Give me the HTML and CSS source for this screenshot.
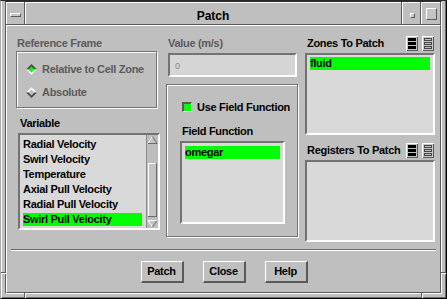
FILE: index.html
```
<!DOCTYPE html>
<html>
<head>
<meta charset="utf-8">
<title>Patch</title>
<link rel="stylesheet" href="styles.css">
</head>
<body>
<div class="win">
  <span class="notch notch-v notch-bl"></span>
  <span class="notch notch-v notch-br"></span>
  <span class="notch notch-h notch-lb"></span>
  <span class="notch notch-h notch-rb"></span>
  <div class="inner">
    <div class="titlebar">
      <div class="tb tb-menu"><span class="menu-bar"></span></div>
      <div class="tb tb-title">Patch</div>
      <div class="tb tb-min"><span class="min-box"></span></div>
      <div class="tb tb-max"><span class="max-box"></span></div>
    </div>
    <div class="client">
      <div class="panes">
        <div class="col col-left">
          <div class="label label-ref"><span class="disabled">Reference Frame</span></div>
          <div class="group group-ref">
            <div class="radio-row">
              <svg class="radio" width="11" height="11" viewBox="0 0 11 11">
                <polygon points="0,5.5 5.5,0 11,5.5" fill="#4a4a4a"/>
                <polygon points="0,5.5 5.5,11 11,5.5" fill="#f4f4f4"/>
                <polygon points="2.5,5.5 5.5,2.5 8.5,5.5 5.5,8.5" fill="#00ff00"/>
              </svg>
              <span class="disabled">Relative to Cell Zone</span>
            </div>
            <div class="radio-row">
              <svg class="radio" width="11" height="11" viewBox="0 0 11 11">
                <polygon points="0,5.5 5.5,0 11,5.5" fill="#f4f4f4"/>
                <polygon points="0,5.5 5.5,11 11,5.5" fill="#4a4a4a"/>
                <polygon points="2.5,5.5 5.5,2.5 8.5,5.5 5.5,8.5" fill="#bfbfbf"/>
              </svg>
              <span class="disabled">Absolute</span>
            </div>
          </div>
          <div class="label label-var">Variable</div>
          <div class="listbox list-var">
            <ul class="items items-var">
              <li class="item">Radial Velocity</li>
              <li class="item">Swirl Velocity</li>
              <li class="item">Temperature</li>
              <li class="item">Axial Pull Velocity</li>
              <li class="item">Radial Pull Velocity</li>
              <li class="item selected">Swirl Pull Velocity</li>
            </ul>
            <svg class="scrollbar" width="12" height="93" viewBox="0 0 12 93">
              <rect x="0" y="0" width="12" height="93" fill="#bdbdbd"/>
              <rect x="0" y="0" width="1" height="93" fill="#8a8a8a"/>
              <polygon points="6.5,1.5 11,8.5 2,8.5" fill="#c4c4c4"/>
              <line x1="2" y1="8.5" x2="6.5" y2="1.5" stroke="#ffffff" stroke-width="1"/>
              <line x1="6.5" y1="1.5" x2="11" y2="8.5" stroke="#6a6a6a" stroke-width="1"/>
              <line x1="2" y1="8.5" x2="11" y2="8.5" stroke="#6a6a6a" stroke-width="1"/>
              <rect x="2" y="28" width="9" height="54" fill="#c4c4c4"/>
              <rect x="2" y="28" width="9" height="1" fill="#ffffff"/>
              <rect x="2" y="28" width="1" height="54" fill="#ffffff"/>
              <rect x="10" y="28" width="1" height="54" fill="#6a6a6a"/>
              <rect x="2" y="81" width="9" height="1" fill="#6a6a6a"/>
              <polygon points="2,85.5 11,85.5 6.5,92" fill="#c4c4c4"/>
              <line x1="2" y1="85.5" x2="11" y2="85.5" stroke="#ffffff" stroke-width="1"/>
              <line x1="2" y1="85.5" x2="6.5" y2="92" stroke="#ffffff" stroke-width="1"/>
              <line x1="11" y1="85.5" x2="6.5" y2="92" stroke="#6a6a6a" stroke-width="1"/>
            </svg>
          </div>
        </div>

        <div class="col col-mid">
          <div class="label label-val"><span class="disabled">Value (m/s)</span></div>
          <div class="input"><span class="input-text">0</span></div>
          <div class="group group-ff">
            <div class="check-row">
              <span class="checkbox"></span>
              <span>Use Field Function</span>
            </div>
            <div class="label label-ff">Field Function</div>
            <div class="listbox list-ff">
              <ul class="items items-pad">
                <li class="item selected">omegar</li>
              </ul>
            </div>
          </div>
        </div>

        <div class="col col-right">
          <div class="hdr">
            <span class="hdr-label">Zones To Patch</span>
            <span class="sel-icons">
              <svg width="12" height="15" viewBox="0 0 12 15">
                <rect width="12" height="15" fill="#ffffff"/>
                <rect x="1" y="1" width="11" height="14" fill="#5a5a5a"/>
                <rect x="1" y="1" width="10" height="13" fill="#bfbfbf"/>
                <rect x="2" y="2" width="8" height="3" fill="#000"/>
                <rect x="2" y="6" width="8" height="3" fill="#000"/>
                <rect x="2" y="10" width="8" height="3" fill="#000"/>
              </svg>
              <svg width="12" height="15" viewBox="0 0 12 15">
                <rect width="12" height="15" fill="#ffffff"/>
                <rect x="1" y="1" width="11" height="14" fill="#5a5a5a"/>
                <rect x="1" y="1" width="10" height="13" fill="#c8c8c8"/>
                <rect x="2.5" y="2.5" width="7" height="2" fill="#bfbfbf" stroke="#444" stroke-width="1"/>
                <rect x="2.5" y="6.5" width="7" height="2" fill="#bfbfbf" stroke="#444" stroke-width="1"/>
                <rect x="2.5" y="10.5" width="7" height="2" fill="#bfbfbf" stroke="#444" stroke-width="1"/>
              </svg>
            </span>
          </div>
          <div class="listbox list-zones">
            <ul class="items items-pad">
              <li class="item selected">fluid</li>
            </ul>
          </div>
          <div class="hdr hdr-reg">
            <span class="hdr-label">Registers To Patch</span>
            <span class="sel-icons">
              <svg width="12" height="15" viewBox="0 0 12 15">
                <rect width="12" height="15" fill="#ffffff"/>
                <rect x="1" y="1" width="11" height="14" fill="#5a5a5a"/>
                <rect x="1" y="1" width="10" height="13" fill="#bfbfbf"/>
                <rect x="2" y="2" width="8" height="3" fill="#000"/>
                <rect x="2" y="6" width="8" height="3" fill="#000"/>
                <rect x="2" y="10" width="8" height="3" fill="#000"/>
              </svg>
              <svg width="12" height="15" viewBox="0 0 12 15">
                <rect width="12" height="15" fill="#ffffff"/>
                <rect x="1" y="1" width="11" height="14" fill="#5a5a5a"/>
                <rect x="1" y="1" width="10" height="13" fill="#c8c8c8"/>
                <rect x="2.5" y="2.5" width="7" height="2" fill="#bfbfbf" stroke="#444" stroke-width="1"/>
                <rect x="2.5" y="6.5" width="7" height="2" fill="#bfbfbf" stroke="#444" stroke-width="1"/>
                <rect x="2.5" y="10.5" width="7" height="2" fill="#bfbfbf" stroke="#444" stroke-width="1"/>
              </svg>
            </span>
          </div>
          <div class="listbox list-reg"></div>
        </div>
      </div>
      <div class="sep"></div>
      <div class="buttons">
        <div class="btn">Patch</div>
        <div class="btn">Close</div>
        <div class="btn">Help</div>
      </div>
    </div>
  </div>
</div>
</body>
</html>
```
FILE: styles.css
```
html, body {
  margin: 0;
  padding: 0;
  background: #bfbfbf;
}
body {
  font-family: "Liberation Sans", Arial, sans-serif;
  font-weight: bold;
  font-size: 11px;
  letter-spacing: -0.3px;
  color: #000;
}

.win {
  position: relative;
  box-sizing: border-box;
  width: 447px;
  height: 299px;
  background: #bfbfbf;
  border: 1px solid;
  border-color: #2a2a2a #000 #000 #a8a8a8;
  padding: 0 4px 4px 4px;
  box-shadow: inset 1px 0 #fff, inset -1px -1px #6a6a6a;
  display: flex;
}

.notch { position: absolute; display: block; }
.notch-v { width: 1px; height: 5px; background: #5a5a5a; border-right: 1px solid #fff; }
.notch-h { width: 5px; height: 1px; background: #5a5a5a; border-bottom: 1px solid #fff; }
.notch-bl { left: 23px; top: 292px; }
.notch-br { left: 420px; top: 292px; }
.notch-lb { left: 0; top: 271px; }
.notch-rb { left: 440px; top: 271px; }

.inner {
  flex: 1;
  display: flex;
  flex-direction: column;
  border: 1px solid;
  border-color: #2a2a2a #fff #fff #5a5a5a;
}

.titlebar {
  display: flex;
  height: 22px;
  border-bottom: 1px solid #5a5a5a;
}
.tb {
  box-sizing: border-box;
  height: 22px;
  box-shadow: inset 1px 1px #fff;
}
.tb-menu {
  width: 19px;
  border-right: 1px solid #5a5a5a;
  padding: 11px 0 0 4px;
}
.menu-bar {
  display: block;
  width: 9px;
  height: 2px;
  background: #c8c8c8;
  border: 1px solid;
  border-color: #fff #5a5a5a #5a5a5a #fff;
}
.tb-title {
  flex: 1;
  text-align: center;
  font-size: 12px;
  letter-spacing: 0;
  line-height: 22px;
  padding-top: 3px;
  border-right: 1px solid #5a5a5a;
  overflow: hidden;
}
.tb-min {
  width: 19px;
  border-right: 1px solid #5a5a5a;
  padding: 11px 0 0 8px;
}
.min-box {
  display: block;
  width: 3px;
  height: 3px;
  background: #c8c8c8;
  border: 1px solid;
  border-color: #fff #5a5a5a #5a5a5a #fff;
}
.tb-max {
  width: 20px;
  border-right: 1px solid #5a5a5a;
  padding: 6px 0 0 5px;
}
.max-box {
  display: block;
  width: 9px;
  height: 10px;
  background: #c4c4c4;
  border: 1px solid;
  border-color: #fff #5a5a5a #5a5a5a #fff;
}

.client {
  flex: 1;
  border: 1px solid;
  border-color: #fff #5a5a5a #5a5a5a #fff;
  padding: 9px 5px 0 9px;
}

.panes {
  display: flex;
  align-items: flex-start;
}
.col-left { width: 145px; margin-right: 5px; }
.col-mid { width: 132px; margin-right: 7px; }
.col-right { width: 130px; }

.label {
  height: 16px;
  line-height: 16px;
  white-space: nowrap;
}
.label-ref { padding-left: 1px; }
.label-var { padding-left: 4px; margin-top: 7px; margin-bottom: 2px; }
.label-val { padding-left: 2px; margin-bottom: 2px; }
.label-ff { padding-left: 2px; margin-top: 8px; margin-bottom: 2px; }

.disabled {
  color: #5a5a5a;
}

.group {
  box-sizing: border-box;
  border: 1px solid #737373;
  box-shadow: inset 1px 1px #fff, 1px 1px #fff;
}
.group-ref {
  width: 141px;
  padding: 9px 0 7px 9px;
}
.radio-row {
  display: flex;
  align-items: center;
  height: 16px;
  gap: 5px;
  white-space: nowrap;
}
.radio-row + .radio-row { margin-top: 7px; }
.radio { flex: none; display: block; }

.listbox {
  box-sizing: border-box;
  border: 2px solid;
  border-color: #737373 #fff #fff #737373;
  background: #d9d9d9;
  overflow: hidden;
}
.list-var {
  display: flex;
  margin-left: 2px;
  width: 142px;
  height: 97px;
}
.items {
  list-style: none;
  margin: 0;
  white-space: nowrap;
}
.items-var {
  flex: 1;
  padding: 3px 4px 0 3px;
}
.items-pad {
  padding: 3px 3px 0 3px;
}
.item {
  height: 13px;
  line-height: 13px;
  margin: 0 0 2px 0;
}
.selected { background: #00ff00; }
.scrollbar { display: block; flex: none; }

.input {
  box-sizing: border-box;
  margin: 0 1px 0 2px;
  height: 24px;
  border: 2px solid;
  border-color: #737373 #fff #fff #737373;
  background: #d6d6d6;
  padding-left: 5px;
  line-height: 20px;
}
.input-text {
  font-size: 9px;
  font-weight: normal;
  color: #8a8a8a;
  letter-spacing: 0;
}

.group-ff {
  margin-top: 7px;
  width: 132px;
  height: 153px;
  padding: 14px 0 0 13px;
}
.check-row {
  display: flex;
  align-items: center;
  height: 16px;
  gap: 5px;
  margin-left: 2px;
  white-space: nowrap;
}
.checkbox {
  flex: none;
  width: 7px;
  height: 7px;
  border-style: solid;
  border-width: 2px 1px 1px 2px;
  border-color: #5a5a5a #fff #fff #5a5a5a;
  background: #00ff00;
}
.list-ff {
  width: 105px;
  height: 83px;
}
.list-zones .items-pad { padding-top: 2px; }

.hdr {
  display: flex;
  align-items: center;
  height: 16px;
  padding-left: 2px;
  white-space: nowrap;
}
.hdr-label { flex: 1; }
.sel-icons {
  display: flex;
  gap: 4px;
  margin-right: 1px;
}
.sel-icons svg { display: block; }
.hdr-reg { margin-top: 7px; }
.list-zones {
  margin-top: 2px;
  height: 82px;
}
.list-reg {
  margin-top: 2px;
  height: 82px;
}

.sep {
  margin: 7px -1px 0 -5px;
  height: 1px;
  background: #6a6a6a;
  border-bottom: 1px solid #fff;
}

.buttons {
  display: flex;
  justify-content: center;
  gap: 19px;
  margin: 10px 0 0 -3px;
}
.btn {
  box-sizing: border-box;
  width: 43px;
  height: 22px;
  border-style: solid;
  border-width: 1px 2px 2px 1px;
  border-color: #fff #5a5a5a #5a5a5a #fff;
  text-align: center;
  line-height: 19px;
}
```
